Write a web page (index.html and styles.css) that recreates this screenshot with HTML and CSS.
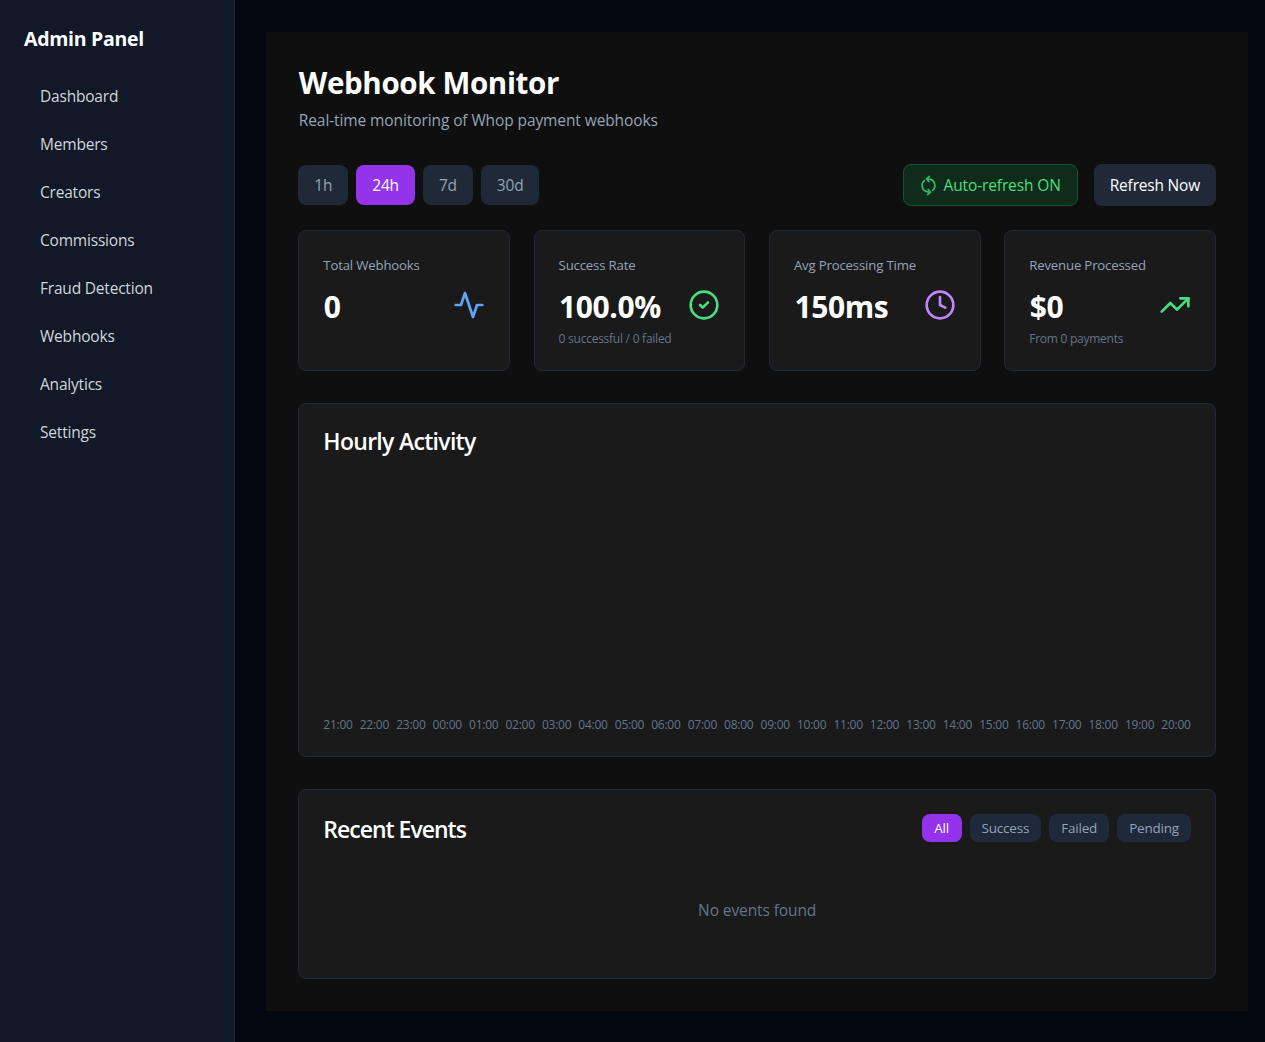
FILE: index.html
```html
<!DOCTYPE html>
<html lang="en">
<head>
  <meta charset="UTF-8">
  <title>Webhook Monitor</title>
  <link rel="stylesheet" href="styles.css">
</head>
<body>
  <div class="app">
    <aside class="sidebar">
      <div class="brand">Admin Panel</div>
      <nav class="nav">
        <a href="#">Dashboard</a>
        <a href="#">Members</a>
        <a href="#">Creators</a>
        <a href="#">Commissions</a>
        <a href="#">Fraud Detection</a>
        <a href="#">Webhooks</a>
        <a href="#">Analytics</a>
        <a href="#">Settings</a>
      </nav>
    </aside>

    <main class="main">
      <div class="panel">
        <h1>Webhook Monitor</h1>
        <p class="subtitle">Real-time monitoring of Whop payment webhooks</p>

        <div class="toolbar">
          <div class="ranges">
            <button class="range">1h</button>
            <button class="range active">24h</button>
            <button class="range">7d</button>
            <button class="range">30d</button>
          </div>
          <div class="actions">
            <button class="auto">
              <svg class="spin" viewBox="0 0 24 24" fill="none" stroke="currentColor" stroke-width="2.4" stroke-linecap="round" stroke-linejoin="round"><path d="M21 12a9 9 0 0 0-15-6.7L3 8"/><path d="M3 3v5h5"/><path d="M3 12a9 9 0 0 0 15 6.7l3-2.7"/><path d="M16 16h5v5"/></svg>
              Auto-refresh ON
            </button>
            <button class="refresh">Refresh Now</button>
          </div>
        </div>

        <div class="stats">
          <div class="card stat">
            <div class="stat-label">Total Webhooks</div>
            <div class="stat-row">
              <div class="stat-value">0</div>
              <svg class="stat-icon blue" viewBox="0 0 24 24" fill="none" stroke="currentColor" stroke-width="2" stroke-linecap="round" stroke-linejoin="round"><path d="M22 12h-4l-3 9L9 3l-3 9H2"/></svg>
            </div>
          </div>
          <div class="card stat">
            <div class="stat-label">Success Rate</div>
            <div class="stat-row">
              <div class="stat-value">100.0%</div>
              <svg class="stat-icon green" viewBox="0 0 24 24" fill="none" stroke="currentColor" stroke-width="2" stroke-linecap="round" stroke-linejoin="round"><circle cx="12" cy="12" r="10"/><path d="m9 12 2 2 4-4"/></svg>
            </div>
            <div class="stat-note">0 successful / 0 failed</div>
          </div>
          <div class="card stat">
            <div class="stat-label">Avg Processing Time</div>
            <div class="stat-row">
              <div class="stat-value">150ms</div>
              <svg class="stat-icon purple" viewBox="0 0 24 24" fill="none" stroke="currentColor" stroke-width="2" stroke-linecap="round" stroke-linejoin="round"><circle cx="12" cy="12" r="10"/><path d="M12 6v6l4 2"/></svg>
            </div>
          </div>
          <div class="card stat">
            <div class="stat-label">Revenue Processed</div>
            <div class="stat-row">
              <div class="stat-value">$0</div>
              <svg class="stat-icon green" viewBox="0 0 24 24" fill="none" stroke="currentColor" stroke-width="2" stroke-linecap="round" stroke-linejoin="round"><path d="m22 7-8.5 8.5-5-5L2 17"/><path d="M16 7h6v6"/></svg>
            </div>
            <div class="stat-note">From 0 payments</div>
          </div>
        </div>

        <section class="card chart">
          <h2>Hourly Activity</h2>
          <div class="hours">
            <span>21:00</span><span>22:00</span><span>23:00</span><span>00:00</span><span>01:00</span><span>02:00</span><span>03:00</span><span>04:00</span><span>05:00</span><span>06:00</span><span>07:00</span><span>08:00</span><span>09:00</span><span>10:00</span><span>11:00</span><span>12:00</span><span>13:00</span><span>14:00</span><span>15:00</span><span>16:00</span><span>17:00</span><span>18:00</span><span>19:00</span><span>20:00</span>
          </div>
        </section>

        <section class="card events">
          <div class="events-head">
            <h2>Recent Events</h2>
            <div class="filters">
              <button class="filter active">All</button>
              <button class="filter">Success</button>
              <button class="filter">Failed</button>
              <button class="filter">Pending</button>
            </div>
          </div>
          <p class="empty">No events found</p>
        </section>
      </div>
    </main>
  </div>
</body>
</html>
```

FILE: styles.css
```css
* {
  box-sizing: border-box;
}
body {
  margin: 0;
  background: #030712;
  color: #fff;
  font-family: "Open Sans", "Noto Sans", sans-serif;
}
button {
  font-family: inherit;
  border: 0;
  cursor: pointer;
}
.app {
  display: flex;
  min-height: 1042px;
}

/* Sidebar */
.sidebar {
  width: 234.5px;
  flex-shrink: 0;
  padding: 24px;
  background: #111827;
  border-right: 1px solid #1f2937;
}
.brand {
  font-size: 19.5px;
  font-weight: 700;
  line-height: 30px;
  letter-spacing: -0.3px;
  margin-bottom: 18px;
}
.nav a {
  display: block;
  padding: 0 16px;
  height: 48px;
  line-height: 48px;
  font-size: 15.5px;
  letter-spacing: -0.2px;
  color: #d1d5db;
  text-decoration: none;
}

/* Main panel */
.main {
  flex: 1;
  padding: 32px 17px 32px 31.8px;
}
.panel {
  padding: 32px;
  background: #0f0f0f;
}
h1 {
  margin: -1px 0 0;
  padding-left: 0.5px;
  font-size: 29.5px;
  font-weight: 700;
  line-height: 40px;
  letter-spacing: -0.35px;
}
.subtitle {
  margin: 5px 0 0;
  padding-left: 0.5px;
  font-size: 15.5px;
  line-height: 24px;
  letter-spacing: -0.1px;
  color: #94a3b8;
}

.toolbar {
  display: flex;
  justify-content: space-between;
  align-items: center;
  margin-top: 32px;
}
.ranges, .actions, .filters {
  display: flex;
}
.ranges {
  gap: 8px;
}
.actions {
  gap: 16px;
}
.range {
  height: 40px;
  padding: 0 16px;
  border-radius: 8px;
  background: #1f2937;
  color: #94a3b8;
  font-size: 15.5px;
  letter-spacing: -0.2px;
}
.range.active, .filter.active {
  background: #9333ea;
  color: #fff;
}
.auto {
  display: flex;
  align-items: center;
  gap: 6px;
  height: 42px;
  padding: 0 16px;
  border: 1px solid #14532d;
  border-radius: 8px;
  background: #0f2c1a;
  color: #4ade80;
  font-size: 15.5px;
  letter-spacing: -0.12px;
}
.spin {
  width: 17px;
  height: 17px;
  color: #38b56a;
  transform: rotate(50deg);
}
.refresh {
  height: 42px;
  padding: 0 16px;
  border-radius: 8px;
  background: #1f2937;
  color: #fff;
  font-size: 15.5px;
  letter-spacing: -0.2px;
}

/* Cards */
.card {
  background: #1a1a1a;
  border: 1px solid #1f2937;
  border-radius: 8px;
}
.stats {
  display: grid;
  grid-template-columns: repeat(4, 1fr);
  gap: 23.5px;
  margin-top: 24px;
}
.stat {
  height: 141px;
  padding: 24px;
}
.stat-label {
  font-size: 13.2px;
  font-weight: 500;
  line-height: 20px;
  letter-spacing: -0.17px;
  color: #94a3b8;
}
.stat-row {
  display: flex;
  justify-content: space-between;
  align-items: center;
  margin-top: 10px;
}
.stat-value {
  padding-top: 2px;
  padding-left: 0.5px;
  height: 40px;
  font-size: 30px;
  font-weight: 700;
  line-height: 40px;
  letter-spacing: -0.4px;
}
.stat-icon {
  width: 32px;
  height: 32px;
}
.blue {
  color: #60a5fa;
}
.green {
  color: #4ade80;
}
.purple {
  color: #c084fc;
}
.stat-note {
  margin-top: 4px;
  font-size: 12px;
  line-height: 20px;
  letter-spacing: -0.25px;
  color: #64748b;
}

h2 {
  margin: 0;
  font-size: 23px;
  font-weight: 600;
  line-height: 28px;
  letter-spacing: -0.7px;
}
.chart {
  height: 354px;
  margin-top: 32px;
  padding: 24px 24px 23px;
  display: flex;
  flex-direction: column;
  justify-content: space-between;
}
.chart h2 {
  line-height: 26px;
}
.hours {
  display: flex;
  justify-content: space-between;
  font-size: 12px;
  line-height: 16px;
  letter-spacing: -0.25px;
  color: #64748b;
}

.events {
  height: 189.5px;
  margin-top: 32px;
  padding: 24px;
}
.events h2 {
  padding-top: 1px;
  letter-spacing: -1px;
}
.events-head {
  display: flex;
  justify-content: space-between;
  align-items: flex-start;
}
.filters {
  gap: 8px;
}
.filter {
  height: 28px;
  padding: 0 12px;
  border-radius: 8px;
  background: #1e293b;
  color: #94a3b8;
  font-size: 13.5px;
  letter-spacing: -0.2px;
}
.filter.active {
  padding: 0 12.5px;
}
.empty {
  margin: 55px 0 0;
  text-align: center;
  font-size: 15.5px;
  line-height: 24px;
  letter-spacing: -0.1px;
  color: #64748b;
}
```
